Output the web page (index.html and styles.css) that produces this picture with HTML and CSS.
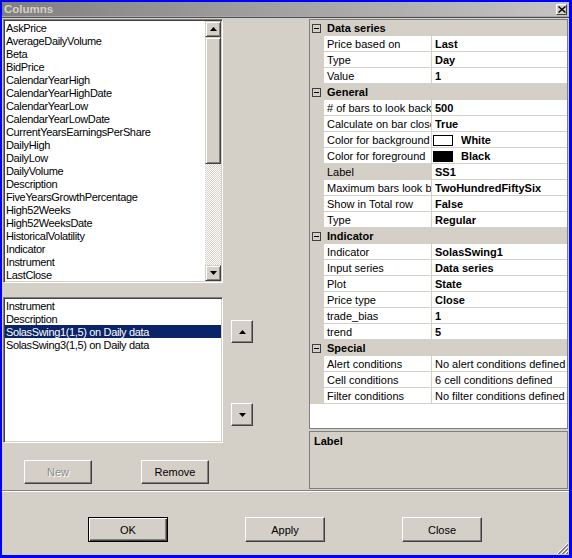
FILE: index.html
```html
<!DOCTYPE html>
<html lang="en">

<head>
    <meta charset="UTF-8">
    <title>Columns</title>
    <link rel="stylesheet" href="styles.css">
</head>

<body>
    <div class="window">
        <div class="titlebar">
            <span class="title">Columns</span>
            <span class="close-btn">
                <svg width="8" height="7" viewBox="0 0 8 7"><path d="M0.5 0.5 L7.5 6.5 M7.5 0.5 L0.5 6.5" stroke="#000" stroke-width="1.4"/></svg>
            </span>
        </div>
        <div class="title-rule"></div>

        <div class="main">
            <div class="left-col">
                <div class="list list-fields">
                    <ul class="items">
                        <li>AskPrice</li>
                        <li>AverageDailyVolume</li>
                        <li>Beta</li>
                        <li>BidPrice</li>
                        <li>CalendarYearHigh</li>
                        <li>CalendarYearHighDate</li>
                        <li>CalendarYearLow</li>
                        <li>CalendarYearLowDate</li>
                        <li>CurrentYearsEarningsPerShare</li>
                        <li>DailyHigh</li>
                        <li>DailyLow</li>
                        <li>DailyVolume</li>
                        <li>Description</li>
                        <li>FiveYearsGrowthPercentage</li>
                        <li>High52Weeks</li>
                        <li>High52WeeksDate</li>
                        <li>HistoricalVolatility</li>
                        <li>Indicator</li>
                        <li>Instrument</li>
                        <li>LastClose</li>
                    </ul>
                    <div class="scrollbar">
                        <div class="sb-btn"><svg width="7" height="4" viewBox="0 0 7 4"><path d="M3.5 0 L7 4 L0 4Z"/></svg></div>
                        <div class="sb-thumb"></div>
                        <div class="sb-track"></div>
                        <div class="sb-btn"><svg width="7" height="4" viewBox="0 0 7 4"><path d="M0 0 L7 0 L3.5 4Z"/></svg></div>
                    </div>
                </div>

                <div class="list list-columns">
                    <ul class="items">
                        <li>Instrument</li>
                        <li>Description</li>
                        <li class="selected">SolasSwing1(1,5) on Daily data</li>
                        <li>SolasSwing3(1,5) on Daily data</li>
                    </ul>
                </div>

                <div class="left-buttons">
                    <button class="btn small" disabled>New</button>
                    <button class="btn small">Remove</button>
                </div>
            </div>

            <div class="mid-col">
                <button class="btn arrow-btn"><svg width="7" height="4" viewBox="0 0 7 4"><path d="M3.5 0 L7 4 L0 4Z"/></svg></button>
                <button class="btn arrow-btn"><svg width="7" height="4" viewBox="0 0 7 4"><path d="M0 0 L7 0 L3.5 4Z"/></svg></button>
            </div>

            <div class="right-col">
                <div class="propgrid">
                    <div class="row cat"><span class="gutter"><span class="expander"></span></span><span class="cat-name">Data series</span></div>
                    <div class="row prop"><span class="gutter"></span><span class="name">Price based on</span><span class="value">Last</span></div>
                    <div class="row prop"><span class="gutter"></span><span class="name">Type</span><span class="value">Day</span></div>
                    <div class="row prop"><span class="gutter"></span><span class="name">Value</span><span class="value">1</span></div>

                    <div class="row cat"><span class="gutter"><span class="expander"></span></span><span class="cat-name">General</span></div>
                    <div class="row prop"><span class="gutter"></span><span class="name"># of bars to look back</span><span class="value">500</span></div>
                    <div class="row prop"><span class="gutter"></span><span class="name">Calculate on bar close</span><span class="value">True</span></div>
                    <div class="row prop"><span class="gutter"></span><span class="name">Color for background</span><span class="value"><span class="swatch white"></span>White</span></div>
                    <div class="row prop"><span class="gutter"></span><span class="name">Color for foreground</span><span class="value"><span class="swatch black"></span>Black</span></div>
                    <div class="row prop selected"><span class="gutter"></span><span class="name">Label</span><span class="value">SS1</span></div>
                    <div class="row prop"><span class="gutter"></span><span class="name">Maximum bars look back</span><span class="value">TwoHundredFiftySix</span></div>
                    <div class="row prop"><span class="gutter"></span><span class="name">Show in Total row</span><span class="value">False</span></div>
                    <div class="row prop"><span class="gutter"></span><span class="name">Type</span><span class="value">Regular</span></div>

                    <div class="row cat"><span class="gutter"><span class="expander"></span></span><span class="cat-name">Indicator</span></div>
                    <div class="row prop"><span class="gutter"></span><span class="name">Indicator</span><span class="value">SolasSwing1</span></div>
                    <div class="row prop"><span class="gutter"></span><span class="name">Input series</span><span class="value">Data series</span></div>
                    <div class="row prop"><span class="gutter"></span><span class="name">Plot</span><span class="value">State</span></div>
                    <div class="row prop"><span class="gutter"></span><span class="name">Price type</span><span class="value">Close</span></div>
                    <div class="row prop"><span class="gutter"></span><span class="name">trade_bias</span><span class="value">1</span></div>
                    <div class="row prop"><span class="gutter"></span><span class="name">trend</span><span class="value">5</span></div>

                    <div class="row cat"><span class="gutter"><span class="expander"></span></span><span class="cat-name">Special</span></div>
                    <div class="row prop"><span class="gutter"></span><span class="name">Alert conditions</span><span class="value plain">No alert conditions defined</span></div>
                    <div class="row prop"><span class="gutter"></span><span class="name">Cell conditions</span><span class="value plain">6 cell conditions defined</span></div>
                    <div class="row prop"><span class="gutter"></span><span class="name">Filter conditions</span><span class="value plain">No filter conditions defined</span></div>
                </div>

                <div class="desc">
                    <div class="desc-title">Label</div>
                </div>
            </div>
        </div>

        <div class="separator"></div>

        <div class="footer">
            <button class="btn big default">OK</button>
            <button class="btn big">Apply</button>
            <button class="btn big">Close</button>
        </div>

        <svg class="grip" width="12" height="12" viewBox="0 0 12 12">
            <path d="M11 1 L1 11 M11 5 L5 11 M11 9 L9 11" stroke="#808080" stroke-width="1"/>
            <path d="M11 2 L2 11 M11 6 L6 11 M11 10 L10 11" stroke="#808080" stroke-width="1"/>
            <path d="M11 0 L0 11 M11 4 L4 11 M11 8 L8 11" stroke="#fff" stroke-width="1"/>
        </svg>
    </div>
</body>

</html>
```

FILE: styles.css
```css
body {
    margin: 0;
    font-family: 'Liberation Sans', Arial, sans-serif;
    font-size: 11px;
    color: #000;
}

.window {
    position: relative;
    box-sizing: border-box;
    width: 572px;
    height: 558px;
    border-style: solid;
    border-color: #0000ff;
    border-width: 2px 3px 3px 2px;
    background-color: #d4d0c8;
    display: flex;
    flex-direction: column;
}

/* title bar */
.titlebar {
    height: 14px;
    display: flex;
    align-items: center;
    background: linear-gradient(to right, #808080, #c4c4c4);
}

.title {
    color: #d4d0c8;
    font-weight: bold;
    font-size: 11.5px;
    line-height: 14px;
    padding-left: 2px;
}

.close-btn {
    margin-left: auto;
    margin-right: 2px;
    width: 11px;
    height: 11px;
    box-sizing: border-box;
    display: flex;
    align-items: center;
    justify-content: center;
    background-color: #d4d0c8;
    border: 1px solid;
    border-color: #fff #404040 #404040 #fff;
}

.title-rule {
    height: 0;
    border-top: 1px solid #a8a8a8;
    border-bottom: 1px solid #505050;
}

/* main area */
.main {
    display: flex;
    height: 472px;
    padding-top: 1px;
    box-sizing: border-box;
}

.left-col {
    margin-left: 1px;
    width: 220px;
    display: flex;
    flex-direction: column;
}

.list {
    box-sizing: border-box;
    background-color: #fff;
    border: 1px solid;
    border-color: #808080 #fff #fff #808080;
    box-shadow: inset 1px 1px #404040, inset -1px -1px #d4d0c8;
    padding: 1px;
    display: flex;
    overflow: hidden;
}

.list-fields {
    height: 264px;
}

.list-columns {
    height: 146px;
    margin-top: 14px;
}

.items {
    list-style: none;
    margin: 0;
    padding: 0;
    flex: 1;
    min-width: 0;
}

.items li {
    height: 13px;
    line-height: 14px;
    padding-left: 1px;
    white-space: nowrap;
    letter-spacing: -0.35px;
}

.items li.selected {
    background-color: #0a246a;
    color: #fff;
}

/* scrollbar */
.scrollbar {
    width: 16px;
    display: flex;
    flex-direction: column;
}

.sb-btn,
.sb-thumb {
    box-sizing: border-box;
    background-color: #d4d0c8;
    border: 1px solid;
    border-color: #d4d0c8 #404040 #404040 #d4d0c8;
    box-shadow: inset 1px 1px #fff, inset -1px -1px #808080;
}

.sb-btn {
    height: 16px;
    display: flex;
    align-items: center;
    justify-content: center;
}

.sb-thumb {
    height: 127px;
}

.sb-track {
    flex: 1;
    background: repeating-conic-gradient(#fff 0 25%, #d4d0c8 0 50%);
    background-size: 2px 2px;
}

/* buttons */
.btn {
    box-sizing: border-box;
    font-family: 'Liberation Sans', Arial, sans-serif;
    font-size: 11px;
    color: #000;
    background-color: #d4d0c8;
    border: 1px solid;
    border-color: #fff #404040 #404040 #fff;
    box-shadow: inset -1px -1px #808080;
    padding: 0;
    margin: 0;
    display: flex;
    align-items: center;
    justify-content: center;
}

.btn:disabled {
    color: #8c8c8c;
    text-shadow: 1px 1px #fff;
}

.btn.small {
    width: 68px;
    height: 24px;
}

.btn.big {
    width: 80px;
    height: 25px;
}

.btn.default {
    border-color: #000;
    box-shadow: inset 1px 1px #fff, inset -1px -1px #404040, inset -2px -2px #808080;
}

.left-buttons {
    display: flex;
    gap: 49px;
    padding-left: 21px;
    margin-top: 17px;
}

.mid-col {
    width: 86px;
    box-sizing: border-box;
    display: flex;
    flex-direction: column;
    align-items: flex-start;
    padding-left: 8px;
    padding-top: 301px;
    gap: 60px;
}

.arrow-btn {
    width: 22px;
    height: 23px;
}

/* property grid */
.right-col {
    width: 259px;
    display: flex;
    flex-direction: column;
    gap: 2px;
}

.propgrid {
    height: 410px;
    box-sizing: border-box;
    border: 1px solid #808080;
    background-color: #fff;
}

.row {
    display: flex;
    height: 16px;
}

.gutter {
    width: 14px;
    flex-shrink: 0;
    background-color: #d4d0c8;
    display: flex;
    align-items: center;
}

.cat {
    background-color: #d4d0c8;
    font-weight: bold;
    line-height: 16px;
}

.expander {
    position: relative;
    width: 9px;
    height: 9px;
    box-sizing: border-box;
    margin-left: 2px;
    border: 1px solid #404040;
}

.expander::after {
    content: "";
    position: absolute;
    left: 1px;
    top: 3px;
    width: 5px;
    height: 1px;
    background-color: #000;
}

.cat-name {
    padding-left: 3px;
}

.name,
.value {
    box-sizing: border-box;
    height: 16px;
    line-height: 14px;
    padding-top: 1px;
    border-bottom: 1px solid #d4d0c8;
    padding-left: 3px;
    white-space: nowrap;
    overflow: hidden;
}

.name {
    width: 108px;
    flex-shrink: 0;
    border-right: 1px solid #d4d0c8;
}

.value {
    flex: 1;
    font-weight: bold;
    display: flex;
    align-items: center;
}

.value.plain {
    font-weight: normal;
}

.prop.selected .name {
    background-color: #d4d0c8;
}

.swatch {
    display: inline-block;
    flex-shrink: 0;
    width: 20px;
    height: 11px;
    box-sizing: border-box;
    border: 1px solid #000;
    margin-left: -2px;
    margin-right: 8px;
}

.swatch.white {
    background-color: #fff;
}

.swatch.black {
    background-color: #000;
}

.desc {
    height: 58px;
    box-sizing: border-box;
    border: 1px solid #808080;
    padding: 2px 4px;
}

.desc-title {
    font-weight: bold;
    line-height: 14px;
}

/* footer */
.separator {
    height: 0;
    border-top: 1px solid #808080;
    border-bottom: 1px solid #fff;
}

.footer {
    flex: 1;
    display: flex;
    gap: 77px;
    padding: 25px 0 0 86px;
}

.grip {
    position: absolute;
    right: 0;
    bottom: 0;
}
```
